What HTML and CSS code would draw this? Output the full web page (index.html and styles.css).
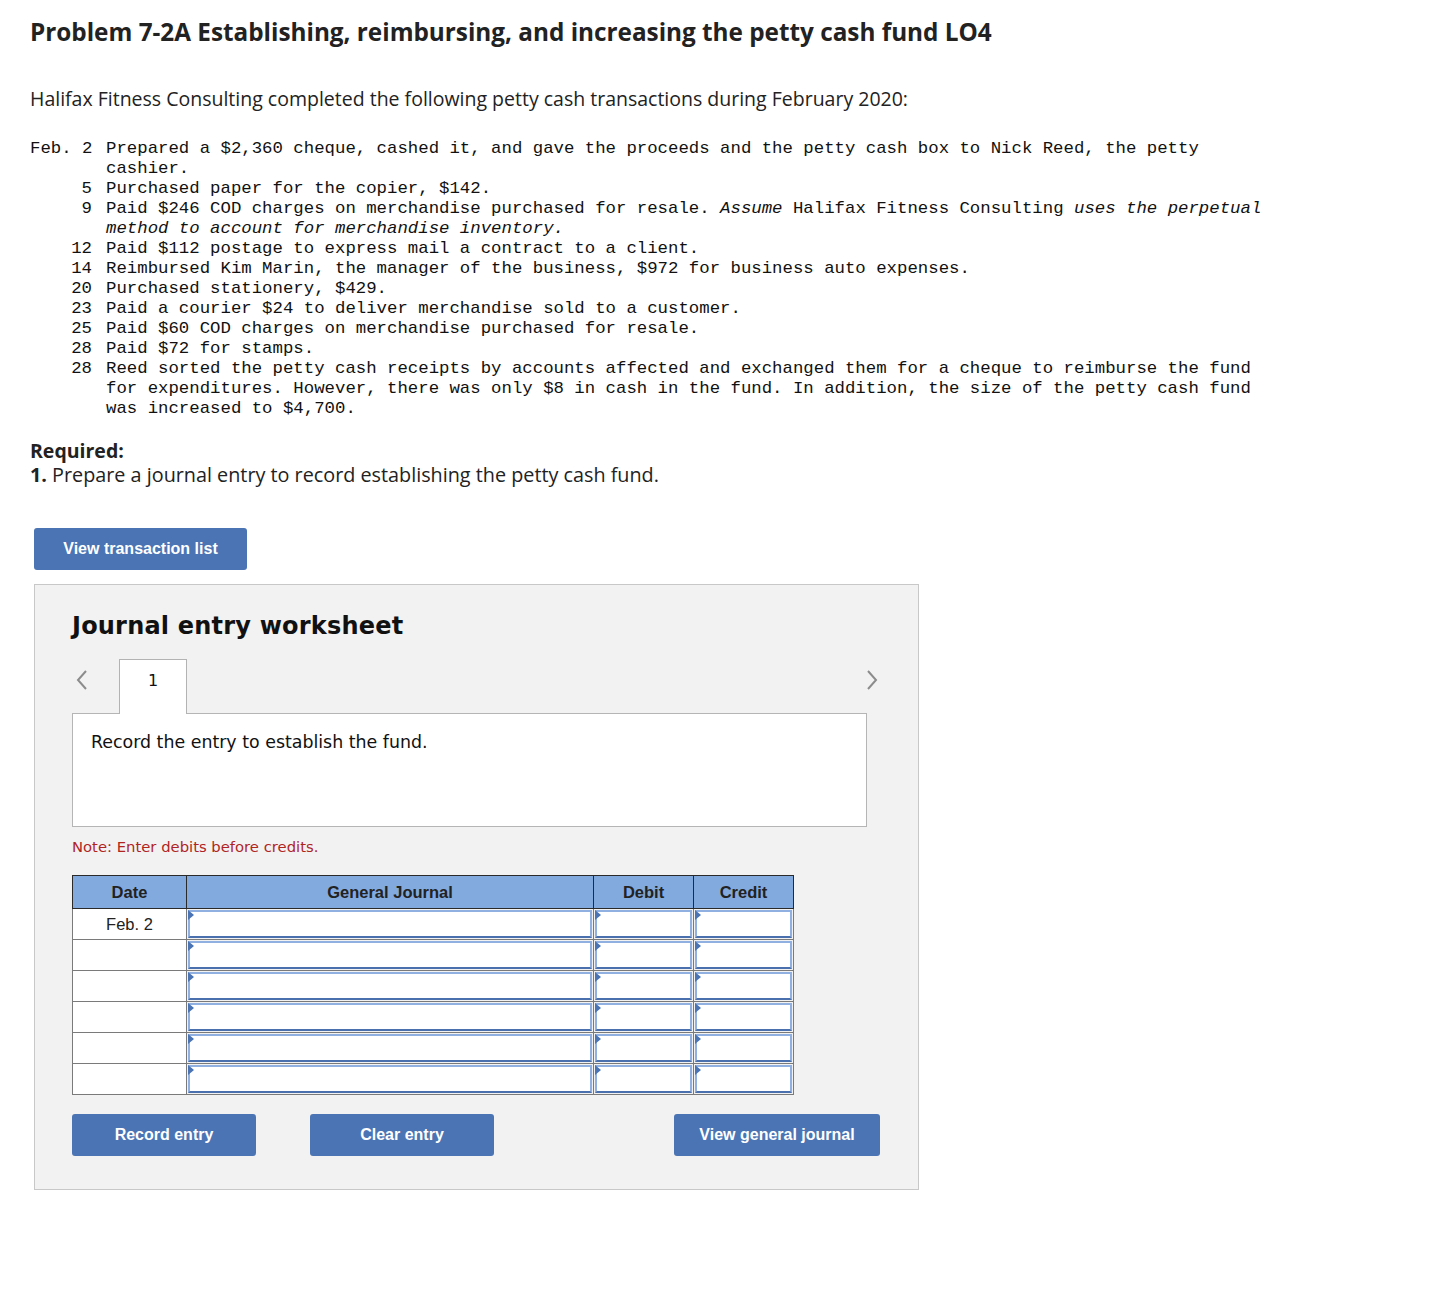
FILE: index.html
```html
<!DOCTYPE html>
<html>
<head>
<meta charset="utf-8">
<link rel="stylesheet" href="styles.css">
</head>
<body>
<div class="page">
  <h1 class="title">Problem 7-2A Establishing, reimbursing, and increasing the petty cash fund LO4</h1>
  <p class="intro">Halifax Fitness Consulting completed the following petty cash transactions during February 2020:</p>
  <div class="tx">
    <div class="d">Feb. 2</div><div class="t">Prepared a $2,360 cheque, cashed it, and gave the proceeds and the petty cash box to Nick Reed, the petty cashier.</div>
    <div class="d">5</div><div class="t">Purchased paper for the copier, $142.</div>
    <div class="d">9</div><div class="t">Paid $246 COD charges on merchandise purchased for resale. <i>Assume</i> Halifax Fitness Consulting <i>uses the perpetual method to account for merchandise inventory.</i></div>
    <div class="d">12</div><div class="t">Paid $112 postage to express mail a contract to a client.</div>
    <div class="d">14</div><div class="t">Reimbursed Kim Marin, the manager of the business, $972 for business auto expenses.</div>
    <div class="d">20</div><div class="t">Purchased stationery, $429.</div>
    <div class="d">23</div><div class="t">Paid a courier $24 to deliver merchandise sold to a customer.</div>
    <div class="d">25</div><div class="t">Paid $60 COD charges on merchandise purchased for resale.</div>
    <div class="d">28</div><div class="t">Paid $72 for stamps.</div>
    <div class="d">28</div><div class="t">Reed sorted the petty cash receipts by accounts affected and exchanged them for a cheque to reimburse the fund for expenditures. However, there was only $8 in cash in the fund. In addition, the size of the petty cash fund was increased to $4,700.</div>
  </div>
  <div class="required">
    <div class="req-h">Required:</div>
    <div class="req-t"><b>1.</b> Prepare a journal entry to record establishing the petty cash fund.</div>
  </div>
  <button class="btn btn-list">View transaction list</button>
  <div class="panel">
    <h2 class="ws-title">Journal entry worksheet</h2>
    <div class="tabs">
      <span class="arrow">
        <svg width="14" height="22" viewBox="0 0 14 22"><path d="M11 2 L3 11 L11 20" fill="none" stroke="#8c8c8c" stroke-width="2"/></svg>
      </span>
      <div class="tab">1</div>
      <span class="spacer"></span>
      <span class="arrow arrow-r">
        <svg width="14" height="22" viewBox="0 0 14 22"><path d="M3 2 L11 11 L3 20" fill="none" stroke="#8c8c8c" stroke-width="2"/></svg>
      </span>
    </div>
    <div class="instr">Record the entry to establish the fund.</div>
    <div class="note">Note: Enter debits before credits.</div>
    <table class="journal">
      <thead>
        <tr><th class="c-date">Date</th><th class="c-gj">General Journal</th><th class="c-amt">Debit</th><th class="c-amt">Credit</th></tr>
      </thead>
      <tbody>
        <tr><td class="date">Feb. 2</td><td class="in"><div class="box"></div></td><td class="in"><div class="box"></div></td><td class="in"><div class="box"></div></td></tr>
        <tr><td class="date"></td><td class="in"><div class="box"></div></td><td class="in"><div class="box"></div></td><td class="in"><div class="box"></div></td></tr>
        <tr><td class="date"></td><td class="in"><div class="box"></div></td><td class="in"><div class="box"></div></td><td class="in"><div class="box"></div></td></tr>
        <tr><td class="date"></td><td class="in"><div class="box"></div></td><td class="in"><div class="box"></div></td><td class="in"><div class="box"></div></td></tr>
        <tr><td class="date"></td><td class="in"><div class="box"></div></td><td class="in"><div class="box"></div></td><td class="in"><div class="box"></div></td></tr>
        <tr><td class="date"></td><td class="in"><div class="box"></div></td><td class="in"><div class="box"></div></td><td class="in"><div class="box"></div></td></tr>
      </tbody>
    </table>
    <div class="actions">
      <button class="btn btn-rec">Record entry</button>
      <button class="btn btn-clr">Clear entry</button>
      <span class="spacer"></span>
      <button class="btn btn-view">View general journal</button>
    </div>
  </div>
</div>
</body>
</html>
```

FILE: styles.css
```css
* { box-sizing: border-box; }
html, body { margin: 0; padding: 0; background: #fff; }
body { font-family: "Open Sans", "Lato", sans-serif; color: #222; }
.page { padding: 17px 0 0 30px; width: 1448px; }
.title { margin: 0; font-size: 24.3px; font-weight: 700; line-height: 30px; color: #222; }
.intro { margin: 40px 0 0; font-size: 19.5px; line-height: 24px; color: #222; }
.tx { margin-top: 28px; display: grid; grid-template-columns: 62px 1165px; column-gap: 14px; font-family: "Liberation Mono", monospace; font-size: 17.35px; line-height: 20px; color: #111; }
.tx .d { text-align: right; white-space: nowrap; }
.tx i { font-style: italic; }
.required { margin-top: 20px; font-size: 19.5px; line-height: 24px; }
.req-h { font-weight: 700; }
.req-t { font-size: 19.8px; }
.req-t b { font-weight: 700; }
.btn { border: 0; border-radius: 3px; background: #4a74b4; color: #fff; font-family: "Liberation Sans", Arial, sans-serif; font-weight: 700; font-size: 16px; height: 42px; cursor: pointer; }
.btn-list { display: block; margin: 41px 0 0 4px; width: 213px; }
.panel { margin: 14px 0 0 4px; width: 885px; height: 606px; background: #f2f2f2; border: 1px solid #c8c8c8; padding: 0 0 0 37px; }
.ws-title { margin: 26px 0 0; font-family: "DejaVu Sans", Verdana, sans-serif; font-size: 24px; font-weight: 700; line-height: 30px; color: #111; letter-spacing: 0.2px; }
.tabs { display: flex; align-items: flex-end; margin-top: 17px; width: 795px; height: 55px; }
.arrow { display: flex; align-items: center; height: 55px; padding-bottom: 12px; width: 47px; padding-left: 3px; }
.arrow-r { width: auto; padding-left: 0; margin-right: -12px; }
.tab { width: 68px; height: 55px; background: #fff; border: 1px solid #b3b3b3; border-bottom: 0; text-align: center; font-family: "DejaVu Sans", Verdana, sans-serif; font-size: 16px; line-height: 42px; color: #111; position: relative; z-index: 1; margin-bottom: -1px; }
.spacer { flex: 1; }
.instr { width: 795px; height: 114px; background: #fff; border: 1px solid #b5b5b5; padding: 17px 0 0 18px; font-family: "DejaVu Sans", Verdana, sans-serif; font-size: 17.4px; line-height: 22px; color: #111; }
.note { margin-top: 11px; font-family: "DejaVu Sans", Verdana, sans-serif; font-size: 14.8px; line-height: 18px; color: #b0251f; }
.journal { margin-top: 19px; border-collapse: collapse; font-family: "Liberation Sans", Arial, sans-serif; }
.journal th { background: #83aadf; border: 1px solid #2a2a2a; height: 33px; font-size: 16.5px; font-weight: 700; color: #222; padding: 0; }
.journal .c-date { width: 114px; }
.journal .c-gj { width: 407px; }
.journal .c-amt { width: 100px; }
.journal td { border: 1px solid #7a7a7a; height: 30px; padding: 0; }
.journal td.date { background: #fff; text-align: center; font-size: 16.5px; color: #222; vertical-align: middle; }
.journal td.in { padding: 1px; background: #f2f2f2; }
.box { position: relative; height: 28px; background: #fff; border: 2px solid; border-color: #8fb0e0 #8fb0e0 #4a70ad #8fb0e0; }
.box::before { content: ""; position: absolute; left: -2px; top: -2px; width: 0; height: 0; border-top: 5px solid transparent; border-bottom: 5px solid transparent; border-left: 6px solid #4a74b4; }
.actions { display: flex; margin-top: 19px; width: 808px; }
.btn-rec { width: 184px; }
.btn-clr { width: 184px; margin-left: 54px; }
.btn-view { width: 206px; }
```
